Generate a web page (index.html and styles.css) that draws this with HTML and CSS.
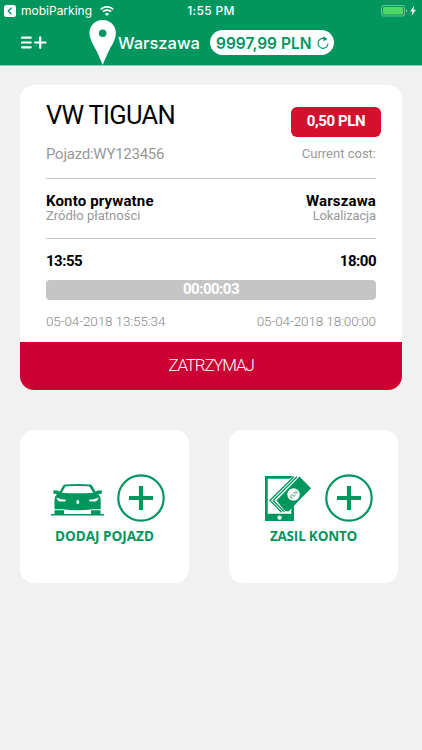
FILE: index.html
```
<!DOCTYPE html>
<html lang="pl">
<head>
<meta charset="utf-8">
<title>mobiParking</title>
<link rel="stylesheet" href="styles.css">
</head>
<body>
<header class="header">
  <div class="status">
    <div class="status-back">
      <svg width="12" height="12" viewBox="0 0 12 12"><rect width="12" height="12" rx="2.5" fill="#fff"/><path d="M7.5 2.8 4.2 6l3.3 3.2" fill="none" stroke="#00965e" stroke-width="1.3"/></svg>
      <span class="status-app">mobiParking</span>
      <svg class="wifi" width="14" height="10" viewBox="0 0 14 10"><path d="M.7 3.4a9 9 0 0 1 12.6 0M2.9 5.7a6 6 0 0 1 8.2 0" fill="none" stroke="#fff" stroke-width="1.8"/><path d="M4.9 7.7a3 3 0 0 1 4.2 0L7 9.9z" fill="#fff"/></svg>
    </div>
    <span class="status-time">1:55 PM</span>
    <svg class="battery" width="37" height="12" viewBox="0 0 37 12"><rect x=".5" y=".5" width="23" height="10.5" rx="2" fill="none" stroke="#6fc3a2"/><rect x="2" y="2" width="20" height="7.5" rx="1" fill="#4cd964"/><path d="M25 4v3.5q1.4-.4 1.4-1.7T25 4z" fill="#6fc3a2"/><path d="m33.3.5-4.2 6h2.4l-.9 4.4 4.2-6.1h-2.4z" fill="#fff"/></svg>
  </div>
  <nav class="bar">
    <svg class="menu" width="26" height="14" viewBox="0 0 26 14"><path d="M1 1.7h8.7M1 6.5h8.700M1 11.300h8.700M14.200 6.500h10.300M19.200 1.300v10.500" stroke="#fff" stroke-width="2.200" stroke-linecap="round"/></svg>
    <svg class="pin" width="28" height="45" viewBox="0 0 28 45"><path fill="#fff" fill-rule="evenodd" d="M13.700 0C6 0 .5 5.600.5 13c0 7 4.600 12.600 7.300 18.500 2.200 4.700 4.200 9.500 5.900 13.500 1.700-4 3.700-8.800 5.900-13.500C22.300 25.600 26.900 20 26.900 13 26.900 5.600 21.400 0 13.700 0zm0 9.500a3.800 3.800 0 1 1 0 7.600 3.800 3.800 0 0 1 0-7.600z"/></svg>
    <span class="city">Warszawa</span>
    <div class="balance"><span class="amount">9997,99 PLN</span><svg width="12" height="14" viewBox="0 0 12 14"><path d="M7.500 2.600A5 5 0 1 0 11 7.500" fill="none" stroke="#00965e" stroke-width="1.100"/><path d="M6.300.2 10.500 2.900 6.500 5.300z" fill="#00965e"/></svg></div>
  </nav>
</header>
<main>
  <section class="card">
    <div class="details">
      <div class="vehicle">
        <div class="vehicle-info"><h1 class="title">VW TIGUAN</h1><span class="plate">Pojazd:WY123456</span></div>
        <div class="cost"><span class="price">0,50 PLN</span><span class="cost-label">Current cost:</span></div>
      </div>
      <div class="source">
        <div class="pair"><b class="strong">Konto prywatne</b><span class="sub">Zródło płatności</span></div>
        <div class="pair end"><b class="strong">Warszawa</b><span class="sub location">Lokalizacja</span></div>
      </div>
      <div class="times"><b>13:55</b><b>18:00</b></div>
      <div class="progress"><b>00:00:03</b></div>
      <div class="dates"><span>05-04-2018 13:55:34</span><span>05-04-2018 18:00:00</span></div>
    </div>
    <button class="stop">ZATRZYMAJ</button>
  </section>
  <div class="tiles">
    <section class="tile add">
      <div class="icons">
        <svg width="54" height="48" viewBox="0 0 54 48"><path fill="#00965e" fill-rule="evenodd" d="M0 40h3.500v-3.700h9.500V40h27v-3.700h9.500V40H53v1.600H0zM3.500 35.200V27q-.2-4.500 2.500-7l-3.300-.3q-.8-1.800-.3-3.300h4.300l2 1.300 3-5.500q.8-1.400 2.400-1.600 13-1 25 0 1.600.2 2.400 1.600l3 5.500 2-1.300h4.300q.5 1.500-.3 3.300l-3.300.3q2.700 2.500 2.500 7v8.200H42q-15 2.200-30.500 0zM10.800 18.800q16 1 31.500 0l-3.500-5.600q-.5-.8-1.400-.9-11-.8-22 0-.9.1-1.400.9zM5.500 23.400q.7 3.900 4 4.200l4-.2q1.700-.3 1.500-1.700-5-.1-9.500-2.300zM47.500 23.400q-4.500 2.200-9.500 2.300-.2 1.400 1.500 1.700l4 .2q3.300-.3 4-4.200zM26.800 26a1.500 2 0 1 0 0 4 1.500 2 0 0 0 0-4z"/></svg>
        <svg class="plus" width="48" height="48" viewBox="0 0 48 48"><circle cx="24" cy="24" r="22.700" fill="none" stroke="#00965e" stroke-width="2.200"/><path d="M12 24h24M24 12v24" stroke="#00965e" stroke-width="4.200"/></svg>
      </div>
      <span class="tile-label">DODAJ POJAZD</span>
    </section>
    <section class="tile fund">
      <div class="icons">
        <svg width="48" height="48" viewBox="0 0 48 48"><path fill="#00965e" fill-rule="evenodd" d="M0 2h29v45H0zM2.700 4.800v35h23.600v-35zM14.600 41.400a2.200 2.200 0 1 0 0 4.400 2.200 2.200 0 0 0 0-4.400z"/><path d="M28 2h6l12 12.500-24 24h-5L4 26z" fill="#fff"/><path d="M29 2.800 5 26.300l11.500 12M32 2.800 8.300 26.500l11 11.600" fill="none" stroke="#00965e" stroke-width="1.300"/><path d="M34.500 2.500 46 14.200 23.500 37.500q-3 .5-5-2l-7-9z" fill="#00965e"/><circle cx="28.500" cy="20.500" r="6.200" fill="#fff"/><text class="note-text" x="28.500" y="22.500" text-anchor="middle" transform="rotate(-45 28.500 20.500)">PLN</text></svg>
        <svg class="plus" width="48" height="48" viewBox="0 0 48 48"><circle cx="24" cy="24" r="22.700" fill="none" stroke="#00965e" stroke-width="2.200"/><path d="M12 24h24M24 12v24" stroke="#00965e" stroke-width="4.200"/></svg>
      </div>
      <span class="tile-label">ZASIL KONTO</span>
    </section>
  </div>
</main>
</body>
</html>
```
FILE: styles.css
```
* { box-sizing: border-box; }
body { margin: 0; width: 422px; height: 750px; overflow: hidden; background: #f1f1f1; font-family: "Open Sans", "Noto Sans", sans-serif; white-space: nowrap; }
svg { display: block; flex: none; }
.header { height: 66px; background: #00965e; border-bottom: 1px solid #8acbb0; color: #fff; font-family: Inter, sans-serif; }
.status { display: grid; grid-template-columns: 1fr auto 1fr; height: 20px; padding: 1px 4px 0; align-items: center; }
.status-back { display: flex; align-items: center; }
.status-app { margin-left: 5px; width: 70px; font-size: 12px; }
.wifi { margin-left: 9px; }
.status-time { font-size: 12px; font-weight: 500; letter-spacing: .3px; }
.battery { justify-self: end; }
.bar { display: flex; height: 45px; align-items: center; padding-left: 21px; }
.pin { margin-left: 42px; }
.city { margin-left: 1px; width: 92px; font-size: 16.5px; font-weight: 500; line-height: 46px; }
.balance { display: flex; align-items: center; width: 124px; height: 25px; padding: 1px 0 0 6px; border-radius: 13px; background: #fff; color: #00965e; }
.amount { width: 101px; font-size: 15.5px; font-weight: 600; }
main { padding: 19px 20px 0; }
.card { width: 382px; height: 305px; border-radius: 14px; overflow: hidden; background: #fff; font-family: Roboto, sans-serif; }
.details { height: 257px; padding: 0 26px; }
.vehicle { display: flex; justify-content: space-between; height: 94px; border-bottom: 1px solid #c5c5c5; }
.vehicle-info { display: flex; flex-direction: column; }
.title { margin: 13px 0 0; font-size: 25.5px; font-weight: 400; line-height: 34px; letter-spacing: -.7px; }
.plate { margin-top: 12px; font-size: 15px; line-height: 20px; color: #999; letter-spacing: -.25px; }
.cost { display: flex; flex-direction: column; align-items: flex-end; padding-top: 22px; }
.price { width: 90px; height: 30px; margin-right: -5px; border-radius: 6px; background: #d5102f; color: #fff; font-size: 15px; font-weight: 700; line-height: 28px; text-align: center; letter-spacing: -.4px; }
.cost-label { margin-top: 8px; font-size: 13px; line-height: 18px; color: #999; }
.source { display: flex; justify-content: space-between; height: 60px; padding-top: 15px; border-bottom: 1px solid #c5c5c5; }
.pair { display: flex; flex-direction: column; }
.end { align-items: flex-end; }
.strong { font-size: 15px; line-height: 15px; font-weight: 700; letter-spacing: .15px; }
.sub { font-size: 13px; line-height: 14px; color: #999; }
.location { letter-spacing: -.15px; }
.times { display: flex; justify-content: space-between; height: 41px; padding-top: 12px; font-size: 15px; line-height: 20px; letter-spacing: -.5px; }
.progress { height: 20px; border-radius: 4px; background: #c5c5c5; color: #fff; font-size: 15px; line-height: 18px; text-align: center; letter-spacing: -.5px; }
.dates { display: flex; justify-content: space-between; padding-top: 11px; font-size: 13.5px; line-height: 20px; font-weight: 300; color: #888; letter-spacing: -.12px; }
.stop { display: block; width: 100%; height: 48px; padding: 0 0 3px; border: 0; background: #cc0033; color: #fff; font: 300 17px Roboto, sans-serif; letter-spacing: -1.2px; }
.tiles { display: flex; gap: 40px; margin-top: 40px; }
.tile { width: 169px; height: 153px; padding-top: 44px; border-radius: 14px; background: #fff; }
.icons { display: flex; height: 48px; }
.add .icons { padding-left: 31px; }
.add .plus { margin-left: 12px; }
.fund .icons { padding-left: 36px; }
.fund .plus { margin-left: 12px; }
.tile-label { display: block; margin-top: 4px; font-size: 13.5px; line-height: 20px; font-weight: 700; text-align: center; color: #00965e; }
.fund .tile-label { letter-spacing: -.2px; }
.note-text { font: 400 5px "Open Sans", sans-serif; fill: #00965e; }
```
